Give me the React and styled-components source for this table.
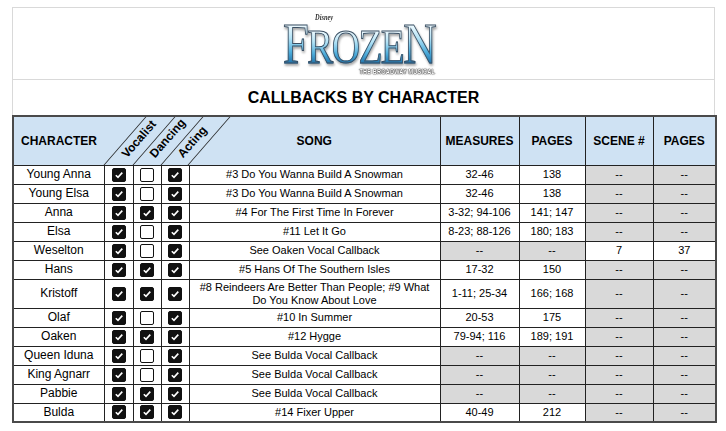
import React from 'react'
import styled, { createGlobalStyle } from 'styled-components'

const GlobalStyle = createGlobalStyle`
  html, body {
    margin: 0;
    padding: 0;
    background: #fff;
  }
  body {
    font-family: "Liberation Sans", Arial, sans-serif;
    color: #000;
  }
`

const Sheet = styled.div`
  width: 703px;
  margin: 7px 0 0 12px;
  display: flex;
  flex-direction: column;
`

const LogoBar = styled.header`
  height: 73px;
  box-sizing: border-box;
  border: 1px solid #d9d9d9;
  display: flex;
  align-items: center;
  justify-content: center;
`

const Logo = styled.div`
  position: relative;
  display: flex;
  flex-direction: column;
  align-items: flex-end;
  margin: 12px 8px 0 0;
  transform: scaleX(0.8);
`

const Word = styled.div`
  display: flex;
  align-items: baseline;
  font-family: "Liberation Serif", "DejaVu Serif", serif;
  line-height: 0.7;
`

const Letter = styled.span`
  font-size: ${props => (props.$big ? 58 : 49)}px;
  margin-right: -2px;
  background: linear-gradient(180deg, #f4fcff 0%, #b4e3f6 35%, #4eaedc 70%, #1d6ea6 100%);
  -webkit-background-clip: text;
  background-clip: text;
  color: transparent;
  -webkit-text-stroke: 1px #3c4f62;
  filter: drop-shadow(1px 2px 1px rgba(0, 0, 0, 0.35));
`

const Disney = styled.span`
  position: absolute;
  top: -10px;
  left: 40px;
  font-family: "Liberation Serif", serif;
  font-style: italic;
  font-weight: 700;
  font-size: 8px;
  line-height: 8px;
  color: #333;
`

const Subtitle = styled.span`
  margin-top: 4px;
  font-size: 7px;
  line-height: 7px;
  font-weight: 700;
  letter-spacing: 0.2px;
  color: #fff;
  text-shadow: 0 0 1px #222, 0 0 1px #222, 0 0 2px #333;
`

const TitleBar = styled.h1`
  margin: 0;
  height: 35px;
  box-sizing: border-box;
  border-left: 1px solid #d9d9d9;
  border-right: 1px solid #d9d9d9;
  display: flex;
  align-items: center;
  justify-content: center;
  font-size: 16px;
  font-weight: 700;
`

const Table = styled.table`
  width: 703px;
  border-collapse: collapse;
  table-layout: fixed;
  border: 2px solid #4a4a4a;
  font-size: 12px;
`

const HeadRow = styled.tr`
  height: 49px;
`

const HeadCell = styled.th`
  position: relative;
  padding: 0;
  background: #cfe2f3;
  border: 1px solid #222;
  font-size: 12px;
  font-weight: 700;
  text-align: center;
  vertical-align: middle;
  ${props => (props.$openRight ? 'border-right: none;' : '')}
  ${props => (props.$openLeft ? 'border-left: none;' : '')}
`

const Slant = styled.div`
  position: absolute;
  z-index: 1;
  left: 0;
  bottom: 0;
  width: 100%;
  height: 100%;
  box-sizing: border-box;
  border-left: 1px solid #222;
  ${props => (props.$last ? 'border-right: 1px solid #222;' : '')}
  transform: skewX(-41deg);
  transform-origin: bottom left;
`

const SlantLabel = styled.span`
  position: absolute;
  z-index: 1;
  left: calc(50% + 5px);
  bottom: 3px;
  line-height: 12px;
  white-space: nowrap;
  transform-origin: 0 50%;
  transform: rotate(-49deg);
`

const Row = styled.tr`
  height: ${props => (props.$tall ? 29 : 19)}px;
`

const Cell = styled.td`
  padding: ${props => (props.$song ? '0 10px' : '0 3px')};
  border: 1px solid #222;
  text-align: center;
  vertical-align: middle;
  font-size: ${props => (props.$name ? 12 : 11)}px;
  line-height: 13px;
  background: ${props => (props.$blank ? '#d9d9d9' : '#fff')};
`

const BoxCell = styled.td`
  padding: 0;
  border: 1px solid #222;
  text-align: center;
  vertical-align: middle;
  line-height: 0;
`

const Box = styled.span`
  display: inline-flex;
  align-items: center;
  justify-content: center;
  width: 14px;
  height: 14px;
  box-sizing: border-box;
  border: 1.5px solid #111;
  border-radius: 2px;
  background: ${props => (props.$on ? '#111' : '#fff')};
`

const Check = ({ on }) => (
  <Box $on={on}>
    {on && (
      <svg width="10" height="10" viewBox="0 0 10 10">
        <path d="M1.8 5.2 L4 7.4 L8.3 2.6" fill="none" stroke="#fff" strokeWidth="1.6" />
      </svg>
    )}
  </Box>
)

const rows = [
  ['Young Anna', [1, 0, 1], '#3 Do You Wanna Build A Snowman', '32-46', '138'],
  ['Young Elsa', [1, 0, 1], '#3 Do You Wanna Build A Snowman', '32-46', '138'],
  ['Anna', [1, 1, 1], '#4 For The First Time In Forever', '3-32; 94-106', '141; 147'],
  ['Elsa', [1, 0, 1], '#11 Let It Go', '8-23; 88-126', '180; 183'],
  ['Weselton', [1, 0, 1], 'See Oaken Vocal Callback', null, null, '7', '37'],
  ['Hans', [1, 1, 1], '#5 Hans Of The Southern Isles', '17-32', '150'],
  ['Kristoff', [1, 1, 1], '#8 Reindeers Are Better Than People; #9 What Do You Know About Love', '1-11; 25-34', '166; 168'],
  ['Olaf', [1, 0, 1], '#10 In Summer', '20-53', '175'],
  ['Oaken', [1, 1, 1], '#12 Hygge', '79-94; 116', '189; 191'],
  ['Queen Iduna', [1, 0, 1], 'See Bulda Vocal Callback', null, null],
  ['King Agnarr', [1, 0, 1], 'See Bulda Vocal Callback', null, null],
  ['Pabbie', [1, 1, 1], 'See Bulda Vocal Callback', null, null],
  ['Bulda', [1, 1, 1], '#14 Fixer Upper', '40-49', '212'],
]

const widths = [91, 29, 28, 28, 251, 79, 66, 68, 63]
const skills = ['Vocalist', 'Dancing', 'Acting']

const Value = ({ v }) => <Cell $blank={!v}>{v || '--'}</Cell>

export default function App() {
  return (
    <>
      <GlobalStyle />
      <Sheet>
        <LogoBar>
          <Logo>
            <Disney>Disney</Disney>
            <Word>
              <Letter $big>F</Letter>
              <Letter>R</Letter>
              <Letter>O</Letter>
              <Letter>Z</Letter>
              <Letter>E</Letter>
              <Letter $big>N</Letter>
            </Word>
            <Subtitle>THE BROADWAY MUSICAL</Subtitle>
          </Logo>
        </LogoBar>
        <TitleBar>CALLBACKS BY CHARACTER</TitleBar>
        <Table>
          <colgroup>
            {widths.map((w, i) => (
              <col key={i} style={{ width: w }} />
            ))}
          </colgroup>
          <thead>
            <HeadRow>
              <HeadCell $openRight>CHARACTER</HeadCell>
              {skills.map((s, i) => (
                <HeadCell key={s} $openLeft $openRight>
                  <Slant $last={i === skills.length - 1} />
                  <SlantLabel>{s}</SlantLabel>
                </HeadCell>
              ))}
              <HeadCell $openLeft>SONG</HeadCell>
              <HeadCell>MEASURES</HeadCell>
              <HeadCell>PAGES</HeadCell>
              <HeadCell>SCENE #</HeadCell>
              <HeadCell>PAGES</HeadCell>
            </HeadRow>
          </thead>
          <tbody>
            {rows.map(([name, checks, song, measures, pages, scene, scenePages]) => (
              <Row key={name} $tall={name === 'Kristoff'}>
                <Cell $name>{name}</Cell>
                {checks.map((c, i) => (
                  <BoxCell key={i}>
                    <Check on={!!c} />
                  </BoxCell>
                ))}
                <Cell $song>{song}</Cell>
                <Value v={measures} />
                <Value v={pages} />
                <Value v={scene} />
                <Value v={scenePages} />
              </Row>
            ))}
          </tbody>
        </Table>
      </Sheet>
    </>
  )
}
